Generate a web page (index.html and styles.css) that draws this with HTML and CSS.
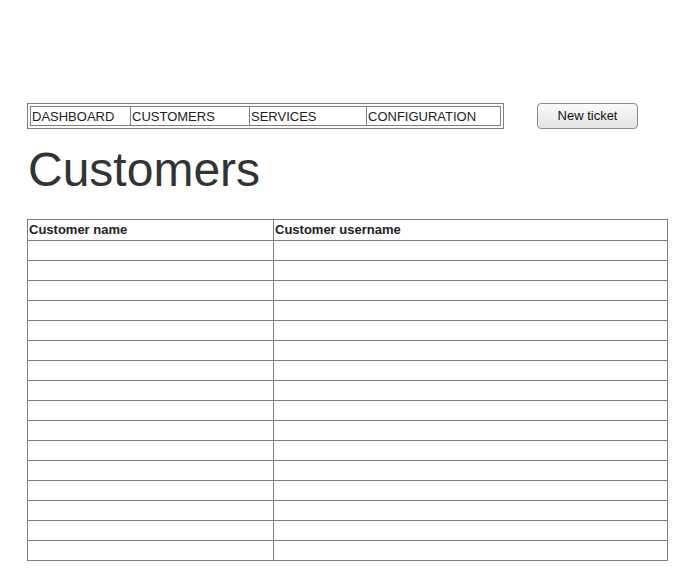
FILE: index.html
```html
<!DOCTYPE html>
<html>
<head>
<meta charset="utf-8">
<link rel="stylesheet" href="styles.css">
</head>
<body>
<div class="page">
  <div class="topbar">
    <nav class="nav">
      <div class="nav-inner">
        <a class="nav-item w1">DASHBOARD</a>
        <a class="nav-item w2">CUSTOMERS</a>
        <a class="nav-item w3">SERVICES</a>
        <a class="nav-item w4">CONFIGURATION</a>
      </div>
    </nav>
    <button class="btn">New ticket</button>
  </div>
  <h1 class="title">Customers</h1>
  <table class="grid">
    <thead>
      <tr><th class="c1">Customer name</th><th>Customer username</th></tr>
    </thead>
    <tbody>
      <tr><td></td><td></td></tr>
      <tr><td></td><td></td></tr>
      <tr><td></td><td></td></tr>
      <tr><td></td><td></td></tr>
      <tr><td></td><td></td></tr>
      <tr><td></td><td></td></tr>
      <tr><td></td><td></td></tr>
      <tr><td></td><td></td></tr>
      <tr><td></td><td></td></tr>
      <tr><td></td><td></td></tr>
      <tr><td></td><td></td></tr>
      <tr><td></td><td></td></tr>
      <tr><td></td><td></td></tr>
      <tr><td></td><td></td></tr>
      <tr><td></td><td></td></tr>
      <tr><td></td><td></td></tr>
    </tbody>
  </table>
</div>
</body>
</html>
```
FILE: styles.css
```css
html, body {
  margin: 0;
  padding: 0;
  background: #ffffff;
}
body {
  font-family: "Liberation Sans", Arial, sans-serif;
  color: #222;
}
.page {
  padding: 103px 0 0 27px;
}
.topbar {
  display: flex;
  align-items: flex-start;
  gap: 33px;
  height: 26px;
}
.nav {
  border: 1px solid #7f7f7f;
  padding: 2px;
}
.nav-inner {
  display: flex;
  border: 1px solid #7f7f7f;
  height: 18px;
}
.nav-item {
  font-size: 13px;
  line-height: 19px;
  padding-left: 1px;
  color: #222;
  box-sizing: border-box;
}
.nav-item + .nav-item {
  border-left: 1px solid #7f7f7f;
}
.w1 { width: 99px; }
.w2 { width: 119px; }
.w3 { width: 117px; }
.w4 { width: 134px; }
.btn {
  width: 101px;
  height: 26px;
  margin-top: 0;
  border: 1px solid #8a8a8a;
  border-radius: 4px;
  background: linear-gradient(#fbfbfb, #e4e4e4);
  font-family: "Liberation Sans", Arial, sans-serif;
  font-size: 13px;
  color: #111;
  padding: 0;
  line-height: 24px;
}
.title {
  margin: 13px 0 21px 0;
  font-size: 48px;
  line-height: 56px;
  font-weight: normal;
  color: #333;
  padding-left: 1px;
}
.grid {
  border-collapse: collapse;
  width: 641px;
}
.grid th, .grid td {
  border: 1px solid #7f7f7f;
  padding: 0 1px;
  height: 19px;
  text-align: left;
  font-size: 13px;
}
.grid th {
  height: 20px;
  font-weight: bold;
  color: #222;
  line-height: 18px;
  padding-top: 0;
}
.grid .c1 {
  width: 243px;
}
```
